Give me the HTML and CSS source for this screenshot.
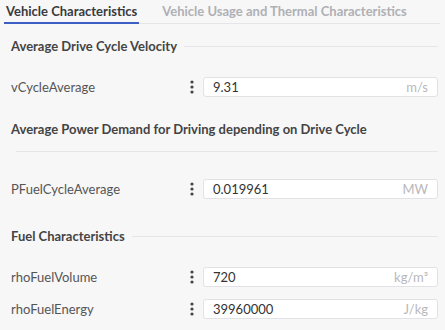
FILE: index.html
```html
<!DOCTYPE html>
<html lang="en">
  <head>
    <meta charset="UTF-8" />
    <meta name="viewport" content="width=device-width, initial-scale=1.0" />
    <title>Vehicle</title>
    <link rel="stylesheet" href="styles.css">
  </head>
  <body>
    <div class="tabs">
      <div class="tab active">Vehicle Characteristics</div>
      <div class="tab">Vehicle Usage and Thermal Characteristics</div>
    </div>

    <div class="content">
      <div class="section-title first">
        <span>Average Drive Cycle Velocity</span>
        <div class="rule"></div>
      </div>
      <div class="row first-row">
        <div class="label">vCycleAverage</div>
        <svg class="kebab" width="4" height="14" viewBox="0 0 4 14"><circle cx="2" cy="2" r="1.6"/><circle cx="2" cy="7" r="1.6"/><circle cx="2" cy="12" r="1.6"/></svg>
        <div class="field"><span class="value">9.31</span><span class="unit">m/s</span></div>
      </div>

      <div class="section-title wide">
        <span>Average Power Demand for Driving depending on Drive Cycle</span>
        <div class="rule"></div>
      </div>
      <div class="row spaced">
        <div class="label">PFuelCycleAverage</div>
        <svg class="kebab" width="4" height="14" viewBox="0 0 4 14"><circle cx="2" cy="2" r="1.6"/><circle cx="2" cy="7" r="1.6"/><circle cx="2" cy="12" r="1.6"/></svg>
        <div class="field"><span class="value">0.019961</span><span class="unit">MW</span></div>
      </div>

      <div class="section-title spaced">
        <span>Fuel Characteristics</span>
        <div class="rule"></div>
      </div>
      <div class="row first-row">
        <div class="label">rhoFuelVolume</div>
        <svg class="kebab" width="4" height="14" viewBox="0 0 4 14"><circle cx="2" cy="2" r="1.6"/><circle cx="2" cy="7" r="1.6"/><circle cx="2" cy="12" r="1.6"/></svg>
        <div class="field"><span class="value">720</span><span class="unit">kg/m³</span></div>
      </div>
      <div class="row">
        <div class="label">rhoFuelEnergy</div>
        <svg class="kebab" width="4" height="14" viewBox="0 0 4 14"><circle cx="2" cy="2" r="1.6"/><circle cx="2" cy="7" r="1.6"/><circle cx="2" cy="12" r="1.6"/></svg>
        <div class="field"><span class="value">39960000</span><span class="unit">J/kg</span></div>
      </div>
    </div>
  </body>
</html>
```

FILE: styles.css
```css
body {
  font-family: "Lato", "Liberation Sans", sans-serif;
  background-color: #f7f7f8;
  color: #555;
  margin: 0;
  font-size: 13px;
}

.tabs {
  display: flex;
  gap: 21px;
  height: 23px;
  margin: 0 5px 0 4px;
  border-bottom: 1px solid #e6e6ea;
}

.tab {
  font-weight: bold;
  color: #b0b0b4;
  padding: 0 2px;
  line-height: 22px;
  white-space: nowrap;
}

.tab.active {
  color: #3a3a3c;
  border-bottom: 2px solid #3d5ec4;
  height: 22px;
}

.content {
  padding: 0 7px 0 11px;
}

.section-title {
  display: flex;
  flex-wrap: wrap;
  align-items: center;
  row-gap: 12px;
  font-weight: bold;
  color: #444;
  line-height: 20px;
  margin-top: 12px;
}

.section-title .rule {
  flex: 1;
  min-width: 60px;
  height: 1px;
  background-color: #e6e6ea;
  margin-left: 7px;
}

.section-title.wide {
  margin-top: 21px;
}

.section-title.wide .rule {
  flex-basis: calc(100% - 5px);
  margin-left: 5px;
}

.section-title.spaced {
  margin-top: 26px;
}

.row {
  display: flex;
  align-items: center;
  height: 22px;
  margin-top: 10px;
}

.row.first-row {
  margin-top: 20px;
}

.row.spaced {
  margin-top: 26px;
}

.label {
  flex: 1;
}

.kebab {
  fill: #444;
  margin-right: 9px;
}

.field {
  width: 235px;
  height: 20px;
  box-sizing: border-box;
  display: flex;
  align-items: center;
  justify-content: space-between;
  padding: 0 9px;
  background-color: #fff;
  border: 1px solid #e2e2e6;
  border-radius: 3px;
}

.value {
  color: #333;
}

.unit {
  color: #b8b8bc;
}
```
